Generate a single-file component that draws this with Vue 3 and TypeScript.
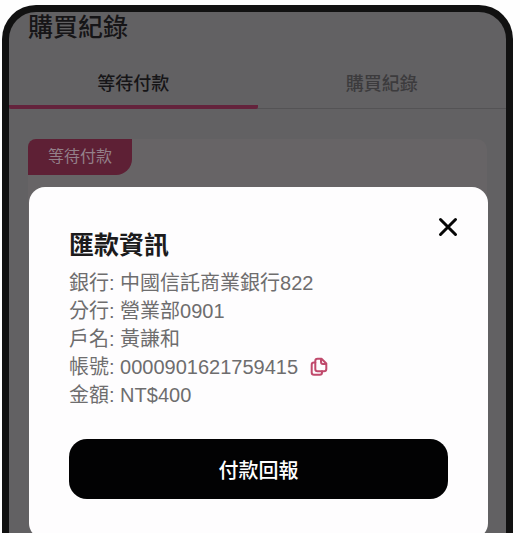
<script setup lang="ts">
import { ref } from 'vue'

interface Detail {
  label: string
  value: string
  copyable?: boolean
}

const tabs: string[] = ['等待付款', '購買紀錄']
const activeTab = ref(0)

const details: Detail[] = [
  { label: '銀行', value: '中國信託商業銀行822' },
  { label: '分行', value: '營業部0901' },
  { label: '戶名', value: '黃謙和' },
  { label: '帳號', value: '0000901621759415', copyable: true },
  { label: '金額', value: 'NT$400' },
]

const open = ref(true)

function copy(value: string): void {
  navigator.clipboard?.writeText(value)
}
</script>

<template>
  <div class="page">
    <div class="phone">
      <main class="screen">
        <h1 class="heading">購買紀錄</h1>
        <nav class="tabs">
          <button
            v-for="(tab, i) in tabs"
            :key="tab"
            type="button"
            class="tab"
            :class="{ active: i === activeTab }"
            @click="activeTab = i"
          >
            {{ tab }}
          </button>
        </nav>
        <section class="orders">
          <article class="order">
            <span class="badge">等待付款</span>
          </article>
        </section>
      </main>

      <div v-if="open" class="overlay">
        <section class="dialog" role="dialog" aria-labelledby="dialog-title">
          <button type="button" class="close" aria-label="關閉" @click="open = false">
            <svg viewBox="0 0 20 20" width="20" height="20" aria-hidden="true">
              <path d="M2.500 2.500 17.500 17.500M17.500 2.500 2.500 17.500" />
            </svg>
          </button>
          <h2 id="dialog-title" class="title">匯款資訊</h2>
          <ul class="details">
            <li v-for="item in details" :key="item.label">
              <span>{{ item.label }}: {{ item.value }}</span>
              <button
                v-if="item.copyable"
                type="button"
                class="copy"
                aria-label="複製"
                @click="copy(item.value)"
              >
                <svg viewBox="0 0 18 20" width="18" height="20" aria-hidden="true">
                  <path d="M7.5 1.800H11.500L16.300 6.500V12Q16.300 14.200 14 14.200H7.500Q5.300 14.200 5.300 12V4Q5.300 1.800 7.500 1.800Z" />
                  <path d="M11 2V5Q11 7 13 7H16" />
                  <path d="M5.300 5.500H4Q1.700 5.500 1.700 7.700V15.500Q1.700 17.800 4 17.800H9.800Q12 17.800 12 15.500V14.200" />
                </svg>
              </button>
            </li>
          </ul>
          <button type="button" class="submit">付款回報</button>
        </section>
      </div>
    </div>
  </div>
</template>

<style>
html,
body {
  margin: 0;
  background: #fefefe;
}
</style>

<style scoped>
.page {
  box-sizing: border-box;
  height: 100vh;
  padding: 5px 7px 0 2px;
  overflow: hidden;
  font-family: 'Liberation Sans', 'Noto Sans CJK TC', sans-serif;
}

button {
  margin: 0;
  padding: 0;
  border: 0;
  background: none;
  font: inherit;
  cursor: pointer;
}

.phone {
  position: relative;
  box-sizing: border-box;
  height: 100%;
  border: 7px solid #111;
  border-bottom: 0;
  border-radius: 34px 34px 0 0;
  background: #626163;
}

.heading {
  margin: 0;
  padding: 0 19px;
  font-size: 25px;
  line-height: 30px;
  font-weight: 500;
  color: #161517;
}

.tabs {
  display: grid;
  grid-template-columns: 1fr 1fr;
  margin-top: 16px;
  box-shadow: inset 0 -1px #545355;
}

.tab {
  height: 51px;
  padding-top: 4px;
  border-bottom: 4px solid transparent;
  border-radius: 2px;
  font-size: 18px;
  line-height: 24px;
  font-weight: 500;
  color: #3c3b3d;
}

.tab.active {
  border-bottom-color: #64233c;
  color: #161517;
}

.orders {
  padding: 30px 19px 0;
}

.order {
  min-height: 120px;
  border-radius: 10px;
  background: #676466;
}

.badge {
  display: inline-block;
  padding: 6px 20px;
  border-radius: 8px 0 16px 0;
  background: #5e2035;
  font-size: 16px;
  line-height: 24px;
  color: #94808a;
}

.overlay {
  position: absolute;
  inset: 0;
  padding: 175px 18px 0 20px;
}

.dialog {
  position: relative;
  padding: 40px;
  border-radius: 16px;
  background: #fefdfe;
}

.close {
  position: absolute;
  top: 30px;
  right: 30px;
  display: flex;
}

.close svg {
  fill: none;
  stroke: #060606;
  stroke-width: 3;
  stroke-linecap: round;
}

.title {
  margin: 0;
  font-size: 25px;
  line-height: 36px;
  font-weight: 700;
  color: #1c1b1c;
}

.details {
  margin: 6px 0 0;
  padding: 0;
  list-style: none;
  font-size: 20px;
  line-height: 28px;
  color: #6e6d6e;
}

.details li {
  display: flex;
  align-items: center;
  gap: 12px;
  height: 28px;
}

.copy {
  display: flex;
}

.copy svg {
  fill: none;
  stroke: #c04a6c;
  stroke-width: 2;
  stroke-linejoin: round;
  stroke-linecap: round;
}

.submit {
  display: block;
  width: 100%;
  height: 60px;
  margin-top: 30px;
  border-radius: 18px;
  background: #020203;
  font-size: 20px;
  font-weight: 500;
  color: #fff;
}
</style>
